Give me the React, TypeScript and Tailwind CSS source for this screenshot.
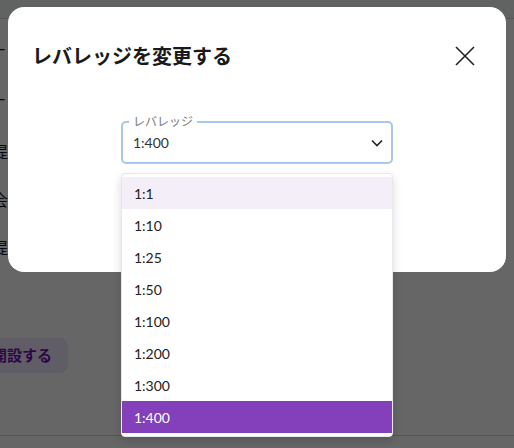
import { useState } from "react";

const options = ["1:1", "1:10", "1:25", "1:50", "1:100", "1:200", "1:300", "1:400"];

const font = { fontFamily: "Lato, 'Noto Sans CJK JP', sans-serif" };

const App = () => {
  const [value, setValue] = useState("1:400");
  const [hovered, setHovered] = useState("1:1");

  return (
    <div className="relative h-[448px] w-[514px] overflow-hidden bg-white" style={font}>
      {/* page underneath */}
      <div className="h-[19px] border-b border-gray-300 bg-gray-100" />
      <div className="-ml-[8px] flex flex-col text-[16px] text-gray-900">
        <div className="mt-[21px] h-[20px] text-[14px] leading-[20px]">ー</div>
        <div className="mt-[30px] h-[20px] text-[14px] leading-[20px]">ー</div>
        <div className="mt-[30px] leading-[24px]">提</div>
        <div className="mt-[24px] leading-[24px]">会</div>
        <div className="mt-[24px] leading-[24px]">提</div>
      </div>
      <div className="mt-[78px] flex">
        <button className="-ml-[54px] h-[35px] rounded-lg bg-purple-100 px-4 text-[15px] font-bold text-purple-800">
          口座開設する
        </button>
      </div>
      <div className="absolute bottom-[12px] left-0 right-0 border-b border-gray-300" />

      {/* overlay */}
      <div className="absolute inset-0 bg-black/60 px-2 pt-[7px]">
        <div className="h-[265px] w-[498px] rounded-2xl bg-white">
          <div className="flex items-center justify-between pl-6 pr-[31px] pt-[35px]">
            <h2 className="text-[20px] font-bold leading-[28px] text-[#1a1a1a]" style={{ fontFamily: "'Noto Sans CJK JP', sans-serif" }}>
              レバレッジを変更する
            </h2>
            <button aria-label="閉じる" className="flex h-5 w-5 items-center justify-center">
              <svg width="20" height="20" viewBox="0 0 20 20" fill="none" stroke="#222" strokeWidth="1.6">
                <path d="M1 1 19 19M19 1 1 19" />
              </svg>
            </button>
          </div>

          <div className="mt-[51px] flex justify-center">
            <div className="relative h-[43px] w-[272px] rounded-[5px] border-2 border-[#a9c7ec]">
              <span
                className="absolute -top-[10px] left-[6px] bg-white px-[4px] text-[12px] leading-[16px] text-[#777]"
                style={{ fontFamily: "'Noto Sans CJK JP', sans-serif" }}
              >
                レバレッジ
              </span>
              <div className="flex h-full items-center justify-between pl-[10px] pr-[8px]">
                <span className="text-[14px] text-[#333]">{value}</span>
                <svg width="12" height="8" viewBox="0 0 12 8" fill="none" stroke="#222" strokeWidth="1.6">
                  <path d="M1 1.5 6 6.5 11 1.5" />
                </svg>
              </div>
            </div>
          </div>
        </div>
      </div>

      {/* dropdown menu */}
      <ul className="absolute left-[121px] top-[173px] w-[272px] rounded-[4px] border border-gray-200 bg-white py-[3px] shadow-[0_4px_10px_rgba(0,0,0,0.15)]">
        {options.map((opt) => (
          <li
            key={opt}
            onMouseEnter={() => setHovered(opt)}
            onClick={() => setValue(opt)}
            className={
              opt === value
                ? "flex h-8 items-center bg-[#8440bb] pl-[12px] text-[14px] text-white"
                : opt === hovered
                ? "flex h-8 items-center bg-[#f3eef8] pl-[12px] text-[14px] text-[#222]"
                : "flex h-8 items-center pl-[12px] text-[14px] text-[#222]"
            }
          >
            {opt}
          </li>
        ))}
      </ul>
    </div>
  );
};

export default App;
